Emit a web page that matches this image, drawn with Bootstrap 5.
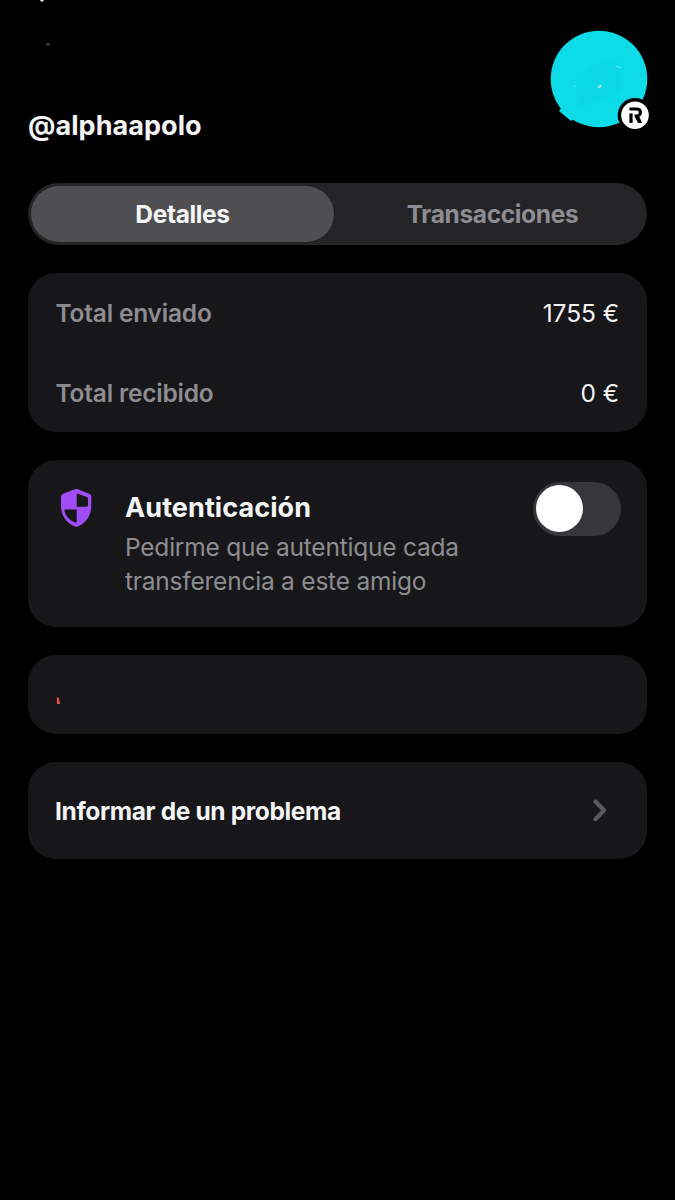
<!DOCTYPE html>
<html lang="es">
<head>
<meta charset="utf-8">
<meta name="viewport" content="width=device-width, initial-scale=1">
<title>@alphaapolo</title>
<link href="https://cdn.jsdelivr.net/npm/bootstrap@5.3.0/dist/css/bootstrap.min.css" rel="stylesheet">
<style>
  body { background: #000; color: #f5f5f7; font-family: Inter, "Liberation Sans", sans-serif; font-size: 24.5px; letter-spacing: -.22px; line-height: 34px; min-height: 1200px; overflow: hidden; }
  .screen { width: 619px; margin-left: 28px; }
  .profile { height: 183px; }
  .speck-layer { left: 0; top: 0; }
  .handle { font-size: 27px; font-weight: 700; line-height: 34px; margin: 0 0 40px; letter-spacing: .05px; }
  .avatar-wrap { width: 98px; height: 98px; margin-top: 30px; margin-right: -1px; }
  .avatar-wrap svg { display: block; overflow: visible; }
  .segments { background: #242426; border-radius: 31px; height: 62px; padding: 3px; margin-bottom: 28px; }
  .segments .nav-link { border-radius: 28px; padding: 0; font-weight: 700; letter-spacing: -.35px; color: #8d8d91; height: 56px; line-height: 57px; text-align: center; width: 310px; padding-left: 7px; }
  .segments .nav-link.active { background: #4f4f51; color: #f7f7f9; width: 303px; padding-left: 0; }
  .panel { background: #171719; border: 0; border-radius: 28px; margin-bottom: 28px; color: inherit; }
  .totals { height: 159px; }
  .total-row { height: 79px; padding: 0 28px; }
  .total-row + .total-row { height: 80px; padding-top: 2px; }
  .label-text { color: #8d8d91; font-weight: 600; margin-left: -.5px; letter-spacing: -.2px; }
  .amount { letter-spacing: -.05px; }
  .auth { height: 167px; padding: 22px 26px 0 28px; }
  .auth-icon { width: 69px; padding: 6px 0 0 4px; }
  .auth h2 { font-size: 27px; font-weight: 700; line-height: 34px; margin: 9px 0 5px; letter-spacing: .08px; }
  .auth p { color: #8d8d91; margin: 0; }
  .toggle { width: 88px; height: 54px; background: #37363b; padding: 3px; }
  .knob { width: 47px; height: 47px; background: #fff; }
  .hidden-action { height: 79px; padding: 12px 28px 0; }
  .report { height: 97px; padding: 1px 39px 0 27px; font-weight: 700; letter-spacing: -.36px; }
</style>
</head>
<body>
<svg class="speck-layer position-absolute" width="80" height="60" aria-hidden="true"><circle cx="42" cy="0" r="1.800" fill="#eee"/><path d="M46 44.200h4" stroke="#777" stroke-width="1"/></svg>
<main class="screen">
  <header class="profile d-flex justify-content-between">
    <h1 class="handle align-self-end">@alphaapolo</h1>
    <div class="avatar-wrap">
      <svg width="98" height="98" viewBox="0 0 98 98" aria-hidden="true">
        <circle cx="49" cy="49" r="48.300" fill="#0edbe8"/>
        <path d="M12 77L9 81L21 91L26 87Z" fill="#0edbe8"/>
        <path d="M32 49q18-26 38-16l3 22-12 13-30 9-6-12z" fill="#0cd8e5"/>
        <path d="M48 56.200l4-1.400-1.500 2.400-2.500.3z" fill="#f8ffd0"/>
        <path d="M23.500 57l2-1.300M66 36l5 2" stroke="#6feff0" stroke-width="1"/>
        <circle cx="85" cy="85.300" r="17.300" fill="#000"/>
        <circle cx="85" cy="85.300" r="13.800" fill="#fff"/>
        <path d="M79.400 83.400h3.200v9.500h-3.200z" fill="#000"/>
        <path d="M79.400 77.500h7.800a4.800 4.800 0 0 1 2.100 9.100L92.100 92.900h-3.900l-3.700-6.300v-2.200h2.400a1.900 1.900 0 0 0 0-3.800h-7.500z" fill="#000"/>
      </svg>
    </div>
  </header>
  <nav class="segments nav d-flex flex-nowrap">
    <a class="nav-link active">Detalles</a>
    <a class="nav-link">Transacciones</a>
  </nav>
  <section class="panel card totals">
    <div class="total-row d-flex align-items-center justify-content-between"><span class="label-text">Total enviado</span><span class="amount">1755 €</span></div>
    <div class="total-row d-flex align-items-center justify-content-between"><span class="label-text">Total recibido</span><span class="amount">0 €</span></div>
  </section>
  <section class="panel card auth flex-row">
    <div class="auth-icon">
      <svg width="32" height="40" viewBox="0 0 32 40" aria-hidden="true"><path fill="#a04cf8" fill-rule="evenodd" d="M14.800 1.300Q16.300.6 17.800 1.300L29.700 6Q31.300 6.700 31.300 8.300V18C31.300 28 25.500 35.300 17.700 38.600Q16.300 39.200 14.900 38.600C7 35.300 1 28 1 18V8.300Q1 6.700 2.600 6ZM16.700 6.700V18.700H26.500Q28 18.700 28 17.200V10.700Q28 9.500 26.800 9L18 5.700Q16.700 5.300 16.700 6.700ZM16.700 21.500H5.800Q4 21.500 4.500 23.300C6 28.500 9.500 32.300 14.900 34.600Q16.700 35.300 16.700 33.500Z"/></svg>
    </div>
    <div class="flex-grow-1"><h2>Autenticación</h2><p>Pedirme que autentique cada<br>transferencia a este amigo</p></div>
    <div class="toggle rounded-pill" role="switch" aria-checked="false" aria-label="Autenticación"><div class="knob rounded-circle"></div></div>
  </section>
  <section class="panel card hidden-action justify-content-center">
    <svg width="6" height="10" viewBox="0 0 6 10" aria-hidden="true"><path d="M.8 1.500h1.800l1.700 6.500h-3.300z" fill="#e0524c"/></svg>
  </section>
  <a class="panel card report flex-row align-items-center justify-content-between text-decoration-none">
    <span>Informar de un problema</span>
    <svg width="16" height="26" viewBox="0 0 16 26" fill="none" stroke="#5a5a5e" stroke-width="4.200" stroke-linecap="round" stroke-linejoin="round" aria-hidden="true"><path d="M3.500 3.500l8.600 8.800L3.500 21.100"/></svg>
  </a>
</main>
<script src="https://cdn.jsdelivr.net/npm/bootstrap@5.3.0/dist/js/bootstrap.bundle.min.js"></script>
</body>
</html>
